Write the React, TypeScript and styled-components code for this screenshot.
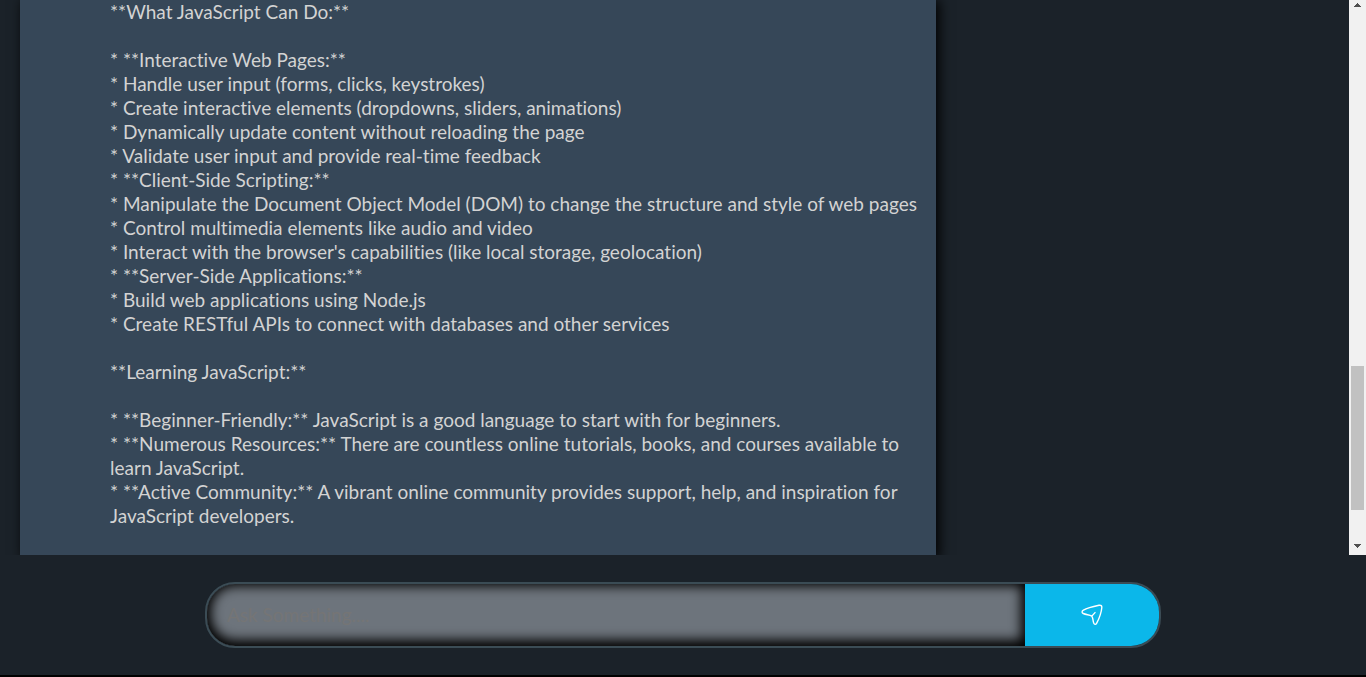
import React from "react";
import styled, { createGlobalStyle } from "styled-components";

const GlobalStyle = createGlobalStyle`
  * { box-sizing: border-box; }
  body {
    margin: 0;
    background: #000;
    font-family: "Gill Sans", "Gill Sans MT", Lato, "Liberation Sans", sans-serif;
    font-size: 19px;
    font-variant-ligatures: none;
    line-height: 24px;
  }
`;

const Page = styled.div`
  display: flex;
  flex-direction: column;
  height: 100vh;
  padding-bottom: 2px;
`;

const Chat = styled.main`
  display: flex;
  flex: 1;
  min-height: 0;
  overflow: hidden;
  background: #1b2229;
`;

const Conversation = styled.div`
  flex: 1;
  min-width: 0;
  padding-left: 20px;
  overflow: hidden;
`;

const Answer = styled.article`
  width: 69%;
  max-width: 916px;
  min-height: 100%;
  padding: 0 12px 32px 90px;
  background: #364758;
  color: #d3d3d3;
  box-shadow: 3px 0 12px #000;
`;

const Line = styled.p`
  min-height: 24px;
  margin: 0;
`;

const Scrollbar = styled.div`
  display: flex;
  flex-direction: column;
  align-items: center;
  width: 17px;
  background: #f1f1f1;
`;

const Arrow = styled.svg`
  flex: none;
  width: 17px;
  height: 17px;
  fill: #505050;
`;

const Track = styled.div`
  display: flex;
  flex: 1;
  flex-direction: column;
  justify-content: flex-end;
  padding-bottom: 28px;
`;

const Thumb = styled.div`
  width: 13px;
  height: 144px;
  background: #c1c1c1;
`;

const Composer = styled.footer`
  display: flex;
  justify-content: center;
  padding: 27px 0;
  background: #1b2229;
`;

const Form = styled.form`
  display: flex;
  width: 70%;
  height: 66px;
  overflow: hidden;
  border: 2px solid #3b4c55;
  border-radius: 30px;
`;

const Question = styled.input`
  flex: 1;
  min-width: 0;
  padding: 0 20px;
  border: 0;
  border-radius: 28px 0 0 28px;
  outline: 0;
  background: #6d747c;
  box-shadow: inset 0 -2px 12px 4px #000;
  color: #fff;
  font: inherit;
  &::placeholder { color: #757575; opacity: 1; }
`;

const SendButton = styled.button`
  display: flex;
  align-items: center;
  justify-content: center;
  width: 134px;
  padding: 0;
  border: 0;
  background: #0bb7ea;
  color: #fff;
`;

const lines = [
  "**What JavaScript Can Do:**",
  "",
  "* **Interactive Web Pages:**",
  "* Handle user input (forms, clicks, keystrokes)",
  "* Create interactive elements (dropdowns, sliders, animations)",
  "* Dynamically update content without reloading the page",
  "* Validate user input and provide real-time feedback",
  "* **Client-Side Scripting:**",
  "* Manipulate the Document Object Model (DOM) to change the structure and style of web pages",
  "* Control multimedia elements like audio and video",
  "* Interact with the browser's capabilities (like local storage, geolocation)",
  "* **Server-Side Applications:**",
  "* Build web applications using Node.js",
  "* Create RESTful APIs to connect with databases and other services",
  "",
  "**Learning JavaScript:**",
  "",
  "* **Beginner-Friendly:** JavaScript is a good language to start with for beginners.",
  "* **Numerous Resources:** There are countless online tutorials, books, and courses available to learn JavaScript.",
  "* **Active Community:** A vibrant online community provides support, help, and inspiration for JavaScript developers.",
];

export default function App() {
  return (
    <Page>
      <GlobalStyle />
      <Chat>
        <Conversation>
          <Answer>
            {lines.map((line, i) => (
              <Line key={i}>{line}</Line>
            ))}
          </Answer>
        </Conversation>
        <Scrollbar aria-hidden="true">
          <Arrow viewBox="0 0 17 17" shapeRendering="crispEdges">
            <path d="M8 3h1v1h1v1h1v1h1v1H5V6h1V5h1V4h1z" />
          </Arrow>
          <Track>
            <Thumb />
          </Track>
          <Arrow viewBox="0 0 17 17" shapeRendering="crispEdges">
            <path d="M5 6h7v1h-1v1h-1v1H9v1H8V9H7V8H6V7H5z" />
          </Arrow>
        </Scrollbar>
      </Chat>
      <Composer>
        <Form onSubmit={(e) => e.preventDefault()}>
          <Question aria-label="Question" placeholder="Ask Something...." />
          <SendButton type="submit" aria-label="Send">
            <svg width="24" height="24" viewBox="0 1 24 24" fill="none" stroke="currentColor" strokeWidth="1.4" strokeLinecap="round" strokeLinejoin="round">
              <path d="M11.8 14.1C9.5 12.6 6.2 12.9 3.3 11.5C1.6 10.7 1.7 9.2 3.4 8.2C7.5 5.8 13.2 4.5 19 3.3C21 2.9 22 3.7 21.8 5.7C21.3 10.6 19.6 15.7 16.7 21.2C15.8 22.9 14.4 22.8 13.7 21C12.7 18.5 13.3 16.4 11.8 14.1L15 10.6" />
            </svg>
          </SendButton>
        </Form>
      </Composer>
    </Page>
  );
}
